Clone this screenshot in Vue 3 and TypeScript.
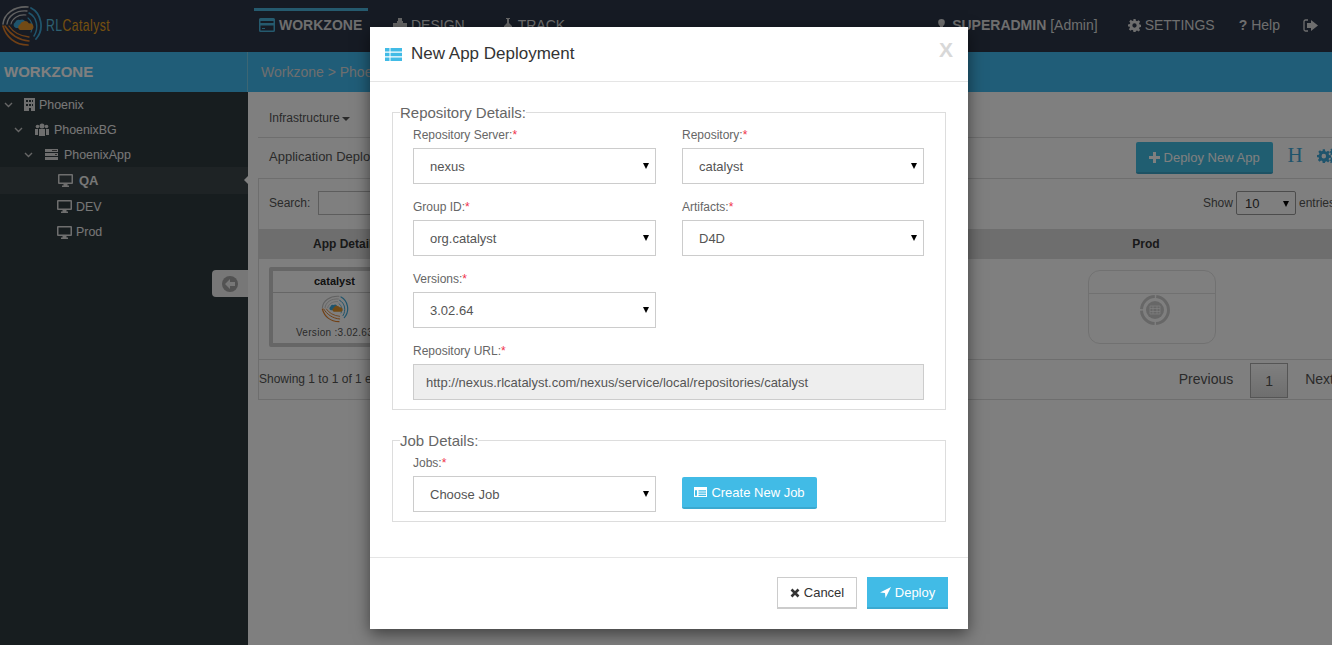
<template>
  <div class="page">
    <svg class="defs" width="0" height="0">
      <symbol id="rl-logo" viewBox="0 0 42 42">
        <g fill="none" stroke-linecap="round">
          <path d="M2 19C3 9 13 1 27 2" stroke="#c4c4c4" stroke-width="1.600" />
          <path d="M6 19C7 11 15 5 26 6" stroke="#c4c4c4" stroke-width="1.300" />
          <path d="M10 19C11 14 17 9 25 10" stroke="#c4c4c4" stroke-width="1.100" />
          <path d="M30 3C40 8 44 24 35 34" stroke="#3fa9d8" stroke-width="1.800" />
          <path d="M28 8C36 12 38 23 33 31" stroke="#3fa9d8" stroke-width="1.500" />
          <path d="M27 13C31 16 33 22 30 27" stroke="#3fa9d8" stroke-width="1.200" />
          <path d="M2 21C5 32 14 40 27 40" stroke="#e2812b" stroke-width="1.700" />
          <path d="M4 21C9 29 17 35 28 36" stroke="#e2812b" stroke-width="1.500" />
          <path d="M8 21C12 27 19 31 28 32" stroke="#e2812b" stroke-width="1.300" />
        </g>
        <path d="M15 23a3 3 0 0 1-1-5.500 4 4 0 0 1 5-2.500 4 4 0 0 1 5 1v7z" fill="#3fa9d8" />
        <path d="M19 25a3 3 0 0 1 0-5.500 5 5 0 0 1 9-1 3.500 3.500 0 0 1 2.500 6.500z" fill="#e2952b" />
      </symbol>
    </svg>

    <header class="topbar">
      <div class="brand">
        <svg class="brand-logo" width="42" height="42"><use href="#rl-logo" /></svg>
        <span class="brand-name"><span class="rl">RL</span>Catalyst</span>
      </div>
      <nav class="nav">
        <a class="nav-item active">
          <svg width="16" height="14" viewBox="0 0 16 14"><path d="M0 1.500A1.500 1.500 0 0 1 1.500 0h13A1.500 1.500 0 0 1 16 1.500v11a1.500 1.500 0 0 1-1.500 1.500h-13A1.500 1.500 0 0 1 0 12.500zM1.500 3v2h13V3zm0 4.500v5h13v-5zM3 10h3v1H3z" fill="#4bb4dc" fill-rule="evenodd" /></svg>
          WORKZONE
        </a>
        <a class="nav-item">
          <svg width="14" height="14" viewBox="0 0 14 14"><path d="M5 0h4v3h1v2h4v4h-3v5H8v-3H6v3H3V9H0V5h4V3h1z" fill="#ccc" /></svg>
          DESIGN
        </a>
        <a class="nav-item track">
          <svg width="10" height="14" viewBox="0 0 10 14"><path d="M3 0h4v1H6v4l3 3v1H6l-1 5-1-5H1V8l3-3V1H3z" fill="#ccc" /></svg>
          TRACK
        </a>
      </nav>
      <div class="user">
        <span class="user-item first">
          <svg width="13" height="13" viewBox="0 0 13 13"><path d="M6.500 0a3.300 3.300 0 0 1 3.300 3.500c0 1.500-.8 3-1.800 3.500v1l4 1.500c.7.300 1 1 1 3.500H0c0-2.500.3-3.200 1-3.500L5 8V7C4 6.500 3.200 5 3.200 3.500A3.300 3.300 0 0 1 6.500 0z" fill="#ddd" /></svg>
          <span><b>SUPERADMIN</b> [Admin]</span>
        </span>
        <span class="user-item settings">
          <svg width="13" height="13" viewBox="0 0 24 24"><path :d="gearPath" fill="#ddd" fill-rule="evenodd" /></svg>
          SETTINGS
        </span>
        <span class="user-item help"><b>?</b> Help</span>
        <span class="user-item logout">
          <svg width="15" height="13" viewBox="0 0 15 13"><path d="M5 1H2.500A1.500 1.500 0 0 0 1 2.500v8A1.500 1.500 0 0 0 2.500 12H5" fill="none" stroke="#ddd" stroke-width="1.300" /><path d="M8 1l7 5.500L8 12V9H4V4h4z" fill="#ddd" /></svg>
        </span>
      </div>
    </header>

    <div class="subbar">
      <div class="subbar-title">WORKZONE</div>
      <div class="crumbs">Workzone &gt; Phoenix &gt; PhoenixBG &gt; PhoenixApp &gt; QA</div>
    </div>

    <div class="workspace">
      <aside class="sidebar">
        <div
          v-for="node in tree"
          :key="node.label"
          class="tree-row"
          :class="[node.kind, { selected: node.selected }]"
          :style="{ paddingLeft: node.indent + 'px' }"
        >
          <svg v-if="node.open" class="chevron" width="9" height="6" viewBox="0 0 9 6"><path d="M1 1l3.500 3.500L8 1" fill="none" stroke="#ccc" stroke-width="1.400" /></svg>
          <svg v-if="node.kind === 'org'" width="11" height="13" viewBox="0 0 11 13"><path d="M0 0h11v13H0zm2 2v2h2V2zm3 0v2h2V2zm3 0v2h1V2zM2 6v2h2V6zm3 0v2h2V6zm3 0v2h1V6zm-3 4v3h2v-3z" fill="#ddd" fill-rule="evenodd" /></svg>
          <svg v-else-if="node.kind === 'group'" width="14" height="13" viewBox="0 0 14 13"><circle cx="7" cy="3" r="2.500" fill="#ddd" /><circle cx="2.500" cy="3.500" r="1.800" fill="#ddd" /><circle cx="11.500" cy="3.500" r="1.800" fill="#ddd" /><path d="M0 6h3v6H0zm11 0h3v6h-3zM4 6h6v7H4z" fill="#ddd" /></svg>
          <svg v-else-if="node.kind === 'app'" width="13" height="11" viewBox="0 0 13 11"><path d="M0 0h13v3H0zm0 4h13v3H0zm0 4h13v3H0z" fill="#ddd" /><path d="M7 1h5v1H7zm3 4h2v1h-2z" fill="#555" /></svg>
          <svg v-else width="15" height="13" viewBox="0 0 15 13"><path d="M1 0h13a1 1 0 0 1 1 1v8a1 1 0 0 1-1 1H9.500v1.500H11V13H4v-1.500h1.500V10H1a1 1 0 0 1-1-1V1a1 1 0 0 1 1-1zm.5 1.500v7h12v-7z" fill="#ddd" fill-rule="evenodd" /></svg>
          <span class="tree-label">{{ node.label }}</span>
        </div>
        <div class="collapse-tab">
          <svg width="16" height="16" viewBox="0 0 16 16"><circle cx="8" cy="8" r="8" fill="#a4a4a4" /><path d="M8 3L3 8l5 5V10h5V6H8z" fill="#eee" /></svg>
        </div>
      </aside>

      <main class="content">
        <div class="tabs-row">Infrastructure<i class="caret"></i></div>
        <div class="deploy-row">
          <span class="deploy-title">Application Deployment</span>
          <div class="deploy-actions">
            <button class="btn btn-teal">
              <svg width="11" height="11" viewBox="0 0 11 11"><path d="M4 0h3v4h4v3H7v4H4V7H0V4h4z" fill="#fff" /></svg>
              Deploy New App
            </button>
            <span class="history">H</span>
            <svg class="config" width="22" height="16" viewBox="0 0 33 24">
              <path :d="gearPath" transform="translate(0 2) scale(.85)" fill="#3fa9d8" fill-rule="evenodd" />
              <path :d="gearPath" transform="translate(19 0) scale(.5)" fill="#3fa9d8" fill-rule="evenodd" />
              <path :d="gearPath" transform="translate(19 13) scale(.45)" fill="#3fa9d8" fill-rule="evenodd" />
            </svg>
          </div>
        </div>
        <section class="panel">
          <div class="panel-tools">
            <label class="search">Search: <input type="text" /></label>
            <label class="length">
              Show
              <span class="mini-select"><select><option>10</option></select></span>
              entries
            </label>
          </div>
          <div class="grid-head">
            <span v-for="col in columns" :key="col">{{ col }}</span>
          </div>
          <div class="grid-body">
            <div class="cell">
              <div class="app-card">
                <div class="app-card-title">catalyst</div>
                <svg width="28" height="28"><use href="#rl-logo" /></svg>
                <div class="app-card-version">Version :3.02.63</div>
              </div>
            </div>
            <div class="cell"></div>
            <div class="cell"></div>
            <div class="cell">
              <div class="empty-card">
                <div class="empty-card-top"></div>
                <div class="empty-card-body">
                  <svg width="32" height="32" viewBox="0 0 32 32">
                    <circle cx="16" cy="16" r="13.500" fill="none" stroke="#cfcfcf" stroke-width="3" stroke-dasharray="20 1.500" />
                    <circle cx="16" cy="16" r="9" fill="#cfcfcf" />
                    <path d="M11 12h10v8H11zM11 14.500h10M11 17.500h10M14 12v8M18 12v8" fill="none" stroke="#fff" stroke-width=".7" />
                  </svg>
                </div>
              </div>
            </div>
          </div>
          <div class="panel-foot">
            <span>Showing 1 to 1 of 1 entries</span>
            <div class="pager">
              <span>Previous</span>
              <span class="page-num">1</span>
              <span>Next</span>
            </div>
          </div>
        </section>
      </main>
    </div>

    <div class="backdrop"></div>

    <div class="modal">
      <div class="modal-head">
        <svg width="17" height="13" viewBox="0 0 17 13"><path d="M0 0h4.500v3.500H0zm5.500 0H17v3.500H5.500zM0 4.700h4.500v3.600H0zm5.500 0H17v3.600H5.500zM0 9.500h4.500V13H0zm5.500 0H17V13H5.500z" fill="#41bbe6" /></svg>
        <h2>New App Deployment</h2>
        <span class="close">X</span>
      </div>
      <div class="modal-body">
        <fieldset class="repo">
          <legend>Repository Details:</legend>
          <div class="field-grid">
            <div v-for="field in repoFields" :key="field.label" class="field">
              <label>{{ field.label }}:<em>*</em></label>
              <span class="select"><select><option>{{ field.value }}</option></select></span>
            </div>
            <div class="field wide">
              <label>Repository URL:<em>*</em></label>
              <input class="url" type="text" readonly value="http://nexus.rlcatalyst.com/nexus/service/local/repositories/catalyst" />
            </div>
          </div>
        </fieldset>
        <fieldset class="jobs">
          <legend>Job Details:</legend>
          <div class="field-grid">
            <div class="field">
              <label>Jobs:<em>*</em></label>
              <span class="select"><select><option>Choose Job</option></select></span>
            </div>
            <div class="job-action">
              <button class="btn btn-sky">
                <svg width="13" height="10" viewBox="0 0 13 10"><path d="M0 0h13v10H0zm1 3.200v5.600h2V3.200zm3.500 0v1.300H12V3.200zm0 2.400v1.200H12V5.600zm0 2.200V9H12V7.800z" fill="#fff" fill-rule="evenodd" /></svg>
                Create New Job
              </button>
            </div>
          </div>
        </fieldset>
      </div>
      <div class="modal-foot">
        <button class="btn btn-plain">
          <svg width="10" height="10" viewBox="0 0 10 10"><path d="M1.500 1.500l7 7m0-7l-7 7" stroke="#333" stroke-width="2.600" /></svg>
          Cancel
        </button>
        <button class="btn btn-deploy">
          <svg width="11" height="11" viewBox="0 0 11 11"><path d="M11 0L5.500 11 5 6 0 5.500z" fill="#fff" /></svg>
          Deploy
        </button>
      </div>
    </div>
  </div>
</template>

<script setup lang="ts">
interface TreeNode {
  label: string
  kind: 'org' | 'group' | 'app' | 'env'
  indent: number
  open?: boolean
  selected?: boolean
}

const tree: TreeNode[] = [
  { label: 'Phoenix', kind: 'org', indent: 4, open: true },
  { label: 'PhoenixBG', kind: 'group', indent: 14, open: true },
  { label: 'PhoenixApp', kind: 'app', indent: 24, open: true },
  { label: 'QA', kind: 'env', indent: 58, selected: true },
  { label: 'DEV', kind: 'env', indent: 57 },
  { label: 'Prod', kind: 'env', indent: 57 }
]

const columns = ['App Details', 'QA', 'DEV', 'Prod']

const repoFields = [
  { label: 'Repository Server', value: 'nexus' },
  { label: 'Repository', value: 'catalyst' },
  { label: 'Group ID', value: 'org.catalyst' },
  { label: 'Artifacts', value: 'D4D' },
  { label: 'Versions', value: '3.02.64' }
]

const gearPath =
  'M10 0h4l.6 3.400 2.200.9L19.600 2.300l2.800 2.800-2 2.800.9 2.200 3.400.6v4l-3.400.6-.9 2.200 2 2.800-2.800 2.800-2.800-2-2.200.9L14 24h-4l-.6-3.400-2.200-.9-2.800 2-2.800-2.800 2-2.800-.9-2.200L0 14v-4l3.400-.6.9-2.200-2-2.800 2.800-2.800 2.800 2 2.200-.9zM12 8a4 4 0 1 0 0 8 4 4 0 0 0 0-8z'
</script>

<style>
html,
body {
  margin: 0;
  height: 100%;
  overflow: hidden;
}
</style>

<style scoped>
.page {
  position: relative;
  width: 1332px;
  height: 645px;
  overflow: hidden;
  font-family: "Liberation Sans", Arial, sans-serif;
  background: #fff;
  color: #555;
}

.defs {
  position: absolute;
}

.topbar {
  display: flex;
  align-items: stretch;
  height: 52px;
  background: #2c3648;
  color: #ddd;
}

.brand {
  display: flex;
  align-items: center;
  width: 254px;
  padding-left: 1px;
  box-sizing: border-box;
}

.brand-logo {
  flex: none;
}

.brand-name {
  margin-left: 3px;
  font-size: 17px;
  letter-spacing: 0.6px;
  color: #e8a020;
  transform: scaleX(0.72);
  transform-origin: left center;
  white-space: nowrap;
}

.rl {
  color: #5cc0e0;
}

.nav {
  display: flex;
  flex: 1;
}

.nav-item {
  display: flex;
  align-items: center;
  gap: 4px;
  padding: 0 5px;
  margin-top: 8px;
  margin-right: 20px;
  height: 28px;
  border-top: 3px solid transparent;
  font-size: 14px;
  color: #ddd;
}

.nav-item.active {
  width: 104px;
  border-top-color: #4bb4dc;
  font-weight: 700;
}

.nav-item.track {
  gap: 5px;
  margin-left: 8px;
}

.user {
  display: flex;
  align-items: center;
  height: 50px;
  font-size: 14px;
}

.user-item {
  display: flex;
  align-items: center;
  gap: 4px;
}

.settings {
  margin-left: 30px;
}

.help {
  margin-left: 24px;
}

.logout {
  margin-left: 23px;
  margin-right: 14px;
}

.subbar {
  display: flex;
  height: 40px;
  background: #41bbf0;
}

.subbar-title {
  width: 248px;
  padding-left: 4px;
  box-sizing: border-box;
  border-right: 1px solid #79cde8;
  line-height: 39px;
  font-size: 15px;
  font-weight: 700;
  color: #fff;
}

.crumbs {
  padding-left: 13px;
  line-height: 40px;
  font-size: 14px;
  color: #ddd;
  white-space: nowrap;
}

.workspace {
  display: flex;
  height: 553px;
}

.sidebar {
  position: relative;
  flex: none;
  width: 248px;
  background: #2e3a3e;
  color: #eee;
}

.tree-row {
  display: flex;
  align-items: center;
  gap: 6px;
  height: 25px;
  font-size: 12.4px;
}

.tree-row .chevron {
  margin-right: 6px;
}

.tree-row.org .chevron {
  margin-right: 5px;
}

.tree-row.org .tree-label {
  margin-left: -2px;
}

.tree-row.group .tree-label {
  margin-left: -1px;
}

.tree-row.env {
  position: relative;
  height: 25.4px;
  gap: 4px;
}

.tree-row.selected {
  height: 27px;
  gap: 6px;
  background: #3c474b;
  font-size: 13px;
  font-weight: 700;
}

.tree-row.selected::after {
  content: "";
  position: absolute;
  right: 0;
  top: 9px;
  border: 4px solid transparent;
  border-right-color: #fff;
}

.collapse-tab {
  position: absolute;
  right: 0;
  top: 178px;
  display: flex;
  align-items: center;
  width: 36px;
  height: 27px;
  padding-left: 10px;
  box-sizing: border-box;
  border-radius: 4px 0 0 4px;
  background: #eee;
}

.content {
  flex: none;
  width: 1200px;
  padding-left: 10px;
  box-sizing: border-box;
  font-size: 12px;
}

.tabs-row {
  height: 45px;
  padding-left: 11px;
  line-height: 52px;
  border-bottom: 1px solid #ddd;
}

.caret {
  display: inline-block;
  margin-left: 2px;
  vertical-align: middle;
  border: 4px solid transparent;
  border-top-color: #555;
  border-bottom: 0;
}

.deploy-row {
  display: flex;
  align-items: center;
  height: 40px;
  padding-left: 11px;
  font-size: 13px;
}

.deploy-title {
  margin-top: -4px;
}

.deploy-actions {
  display: flex;
  align-items: center;
  margin-left: 730px;
}

.btn {
  display: inline-flex;
  align-items: center;
  justify-content: center;
  gap: 4px;
  height: 32px;
  box-sizing: border-box;
  border: 0;
  font-family: inherit;
  font-size: 13px;
  color: #fff;
}

.btn-teal {
  flex: none;
  width: 137px;
  border-radius: 2px;
  border-bottom: 2px solid #3aa5c8;
  background: #41bce2;
}

.history {
  margin-left: 15px;
  margin-top: -6px;
  font-family: "Liberation Serif", serif;
  font-size: 21px;
  color: #3fa9d8;
}

.config {
  flex: none;
  margin-left: 14px;
  margin-top: -5px;
}

.panel {
  height: 220px;
  border: 1px solid #ddd;
  border-right: 0;
}

.panel-tools {
  display: flex;
  align-items: center;
  justify-content: space-between;
  height: 48px;
  padding: 0 0 2px 10px;
}

.search {
  display: flex;
  align-items: center;
  gap: 8px;
}

.search input {
  width: 200px;
  height: 24px;
  box-sizing: border-box;
  border: 1px solid #bbb;
}

.length {
  display: flex;
  align-items: center;
  gap: 3px;
  margin-right: 113px;
}

.mini-select {
  position: relative;
  display: block;
  width: 60px;
  height: 24px;
}

.mini-select select {
  width: 100%;
  height: 100%;
  padding-left: 8px;
  border: 1px solid #999;
  border-radius: 2px;
  background: #fff;
  font-family: inherit;
  font-size: 13px;
  color: #333;
  appearance: none;
}

.mini-select::after,
.select::after {
  content: "";
  position: absolute;
  right: 7px;
  top: 10px;
  border: 3px solid transparent;
  border-top: 6px solid #000;
  border-bottom: 0;
}

.grid-head,
.grid-body {
  display: grid;
  grid-template-columns: 174px 313px 314px 172px 1fr;
}

.grid-head {
  height: 30px;
  align-items: center;
  background: #dcdcdc;
  font-weight: 700;
  color: #333;
  text-align: center;
}

.grid-body {
  height: 100px;
  border-bottom: 1px solid #ddd;
}

.cell {
  position: relative;
}

.app-card {
  margin: 8px 0 0 10px;
  width: 123px;
  height: 72px;
  border: 4px solid #ccc;
  border-radius: 2px;
  text-align: center;
  font-size: 10px;
}

.app-card-title {
  height: 21px;
  line-height: 20px;
  border-bottom: 1px solid #ccc;
  font-size: 11px;
  font-weight: 700;
  color: #222;
}

.app-card svg {
  display: block;
  margin: 2px auto 0;
}

.app-card-version {
  margin-top: 4px;
  letter-spacing: 0.3px;
  white-space: nowrap;
}

.empty-card {
  width: 128px;
  height: 74px;
  margin: 11px 0 0 28px;
  box-sizing: border-box;
  border: 1px solid #e3e3e3;
  border-radius: 12px;
}

.empty-card-top {
  height: 22px;
  border-bottom: 1px solid #e3e3e3;
}

.empty-card-body {
  display: flex;
  justify-content: center;
  padding-left: 6px;
}

.panel-foot {
  display: flex;
  align-items: center;
  justify-content: space-between;
  height: 38px;
  white-space: nowrap;
}

.pager {
  display: flex;
  align-items: center;
  gap: 17px;
  margin-right: 114px;
  font-size: 14px;
}

.page-num {
  width: 38px;
  height: 35px;
  margin-top: 2px;
  line-height: 35px;
  box-sizing: border-box;
  border: 1px solid #aaa;
  background: linear-gradient(#fff, #ddd);
  text-align: center;
}

.backdrop {
  position: absolute;
  inset: 0;
  background: rgba(0, 0, 0, 0.5);
}

.modal {
  position: absolute;
  left: 370px;
  top: 27px;
  width: 598px;
  height: 602px;
  display: flex;
  flex-direction: column;
  background: #fff;
  box-shadow: 0 5px 15px rgba(0, 0, 0, 0.5);
}

.modal-head {
  display: flex;
  align-items: center;
  gap: 9px;
  flex: none;
  height: 55px;
  padding: 0 15px;
  box-sizing: border-box;
  border-bottom: 1px solid #e5e5e5;
}

.modal-head h2 {
  flex: 1;
  margin: 0;
  font-size: 17px;
  font-weight: 400;
  color: #333;
}

.close {
  margin-top: -8px;
  font-size: 21px;
  font-weight: 700;
  color: #d8d8d8;
}

.modal-body {
  flex: 1;
  padding: 21px 22px 0;
}

fieldset {
  margin: 0;
  padding: 0 21px 0 20px;
  border: 1px solid #ddd;
}

legend {
  margin-left: -13px;
  padding: 0;
  font-size: 15px;
  line-height: 17px;
  color: #666;
}

.repo {
  height: 306px;
  box-sizing: border-box;
  margin-top: 1px;
}

.jobs {
  height: 90px;
  box-sizing: border-box;
  margin-top: 22px;
}

.field-grid {
  display: grid;
  grid-template-columns: 243px 242px;
  column-gap: 26px;
  row-gap: 16px;
  margin-top: 7px;
}

.field label {
  display: block;
  height: 20px;
  line-height: 14px;
  font-size: 12px;
  color: #666;
}

.field em {
  font-style: normal;
  color: #f0324b;
}

.field.wide {
  grid-column: 1 / -1;
}

.select {
  position: relative;
  display: block;
  height: 36px;
}

.select::after {
  top: 15px;
  right: 7px;
}

.select select {
  width: 100%;
  height: 36px;
  padding: 0 16px;
  box-sizing: border-box;
  border: 1px solid #ccc;
  border-radius: 0;
  background: #fff;
  font-family: inherit;
  font-size: 13px;
  color: #555;
  appearance: none;
}

.url {
  display: block;
  width: 100%;
  height: 36px;
  padding: 0 12px;
  box-sizing: border-box;
  border: 1px solid #ccc;
  background: #eee;
  font-family: inherit;
  font-size: 13px;
  color: #555;
}

.job-action {
  padding-top: 21px;
}

.btn-sky {
  width: 135px;
  border-radius: 2px;
  border-bottom: 2px solid #3aa9d0;
  background: #41bbe6;
}

.modal-foot {
  display: flex;
  justify-content: flex-end;
  gap: 10px;
  flex: none;
  height: 72px;
  padding: 19px 20px 0 0;
  box-sizing: border-box;
  border-top: 1px solid #e5e5e5;
}

.btn-plain {
  width: 80px;
  border: 1px solid #ccc;
  border-bottom-width: 2px;
  background: #fff;
  color: #333;
}

.btn-deploy {
  width: 81px;
  border-bottom: 2px solid #3aa9d0;
  background: #41bbe6;
}
</style>
